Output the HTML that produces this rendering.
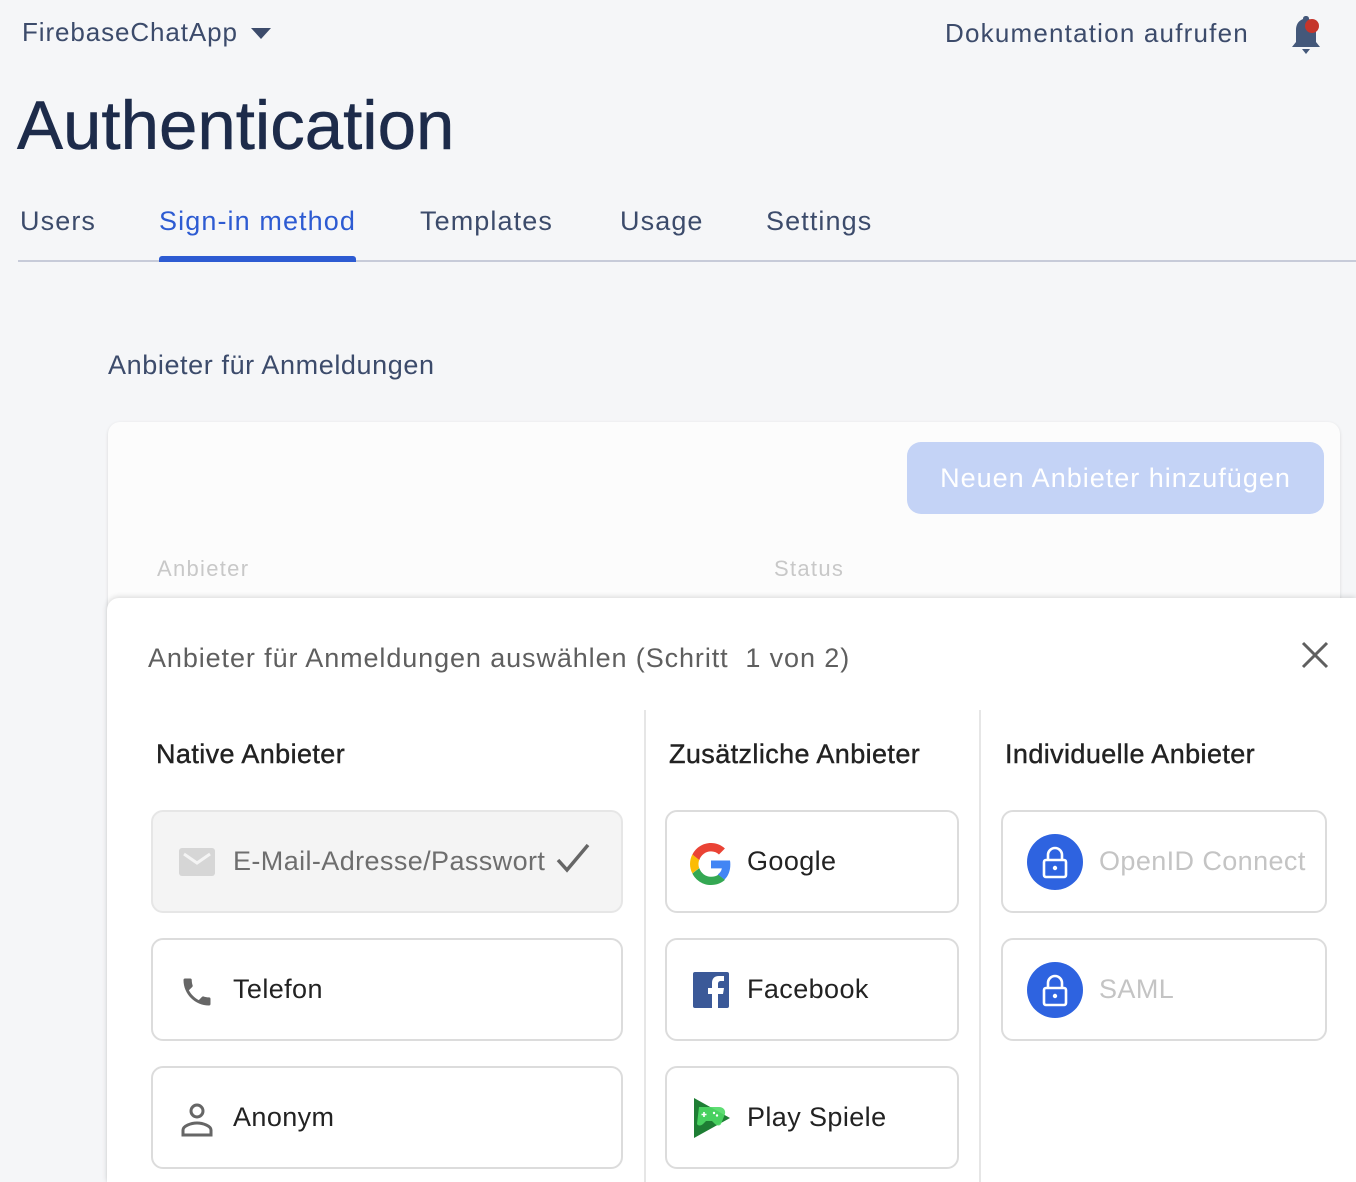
<!DOCTYPE html>
<html style="width:1356px;height:1182px;overflow:hidden"><head><meta charset="utf-8"><style>
*{box-sizing:border-box;margin:0;padding:0}
html,body{width:1356px;height:1182px;overflow:hidden}
body{background:#f5f6f8;font-family:"Liberation Sans",sans-serif;position:relative}
.a{position:absolute;white-space:nowrap}
.tab{font-size:27px;color:#3c4b6b;letter-spacing:1.1px;top:206px}
.h{font-size:27px;color:#222;letter-spacing:0.4px;-webkit-text-stroke:0.4px #222;top:739px}
.btn{position:absolute;border:2px solid #dcdcdc;border-radius:12px;background:#fff;height:103px}
.btn .t{position:absolute;left:80px;top:34px;font-size:27px;color:#222;letter-spacing:0.4px;white-space:nowrap}
.btn svg{position:absolute}
</style></head><body>
<div class="a" style="left:22px;top:17px;font-size:26px;color:#3c4b6b;letter-spacing:0.9px">FirebaseChatApp</div>
<svg class="a" style="left:251px;top:28px" width="20" height="12"><path d="M0 0h20L10 11z" fill="#3c4b6b"/></svg>
<div class="a" style="left:945px;top:18px;font-size:26px;color:#3c4b6b;letter-spacing:1.2px">Dokumentation aufrufen</div>
<svg class="a" style="left:1288px;top:14px" width="36" height="42"><path d="M18 2c-2 0-3 1-3 3-5 2-7 6-7 11v12l-4 5h28l-4-5V16c0-5-2-9-7-11 0-2-1-3-3-3z" fill="#44587a"/><path d="M14 35h8l-4 5z" fill="#44587a"/><circle cx="24" cy="12" r="7" fill="#c5352b"/></svg>
<div class="a" style="left:17px;top:86px;font-size:69px;color:#1d2b4a;-webkit-text-stroke:0.5px #1d2b4a">Authentication</div>
<div class="a tab" style="left:20px">Users</div>
<div class="a tab" style="left:159px;color:#2d5bd2">Sign-in method</div>
<div class="a tab" style="left:420px">Templates</div>
<div class="a tab" style="left:620px">Usage</div>
<div class="a tab" style="left:766px">Settings</div>
<div class="a" style="left:18px;top:260px;width:1338px;height:2px;background:#c7cbd9"></div>
<div class="a" style="left:159px;top:256px;width:197px;height:6px;background:#2d5bd2;border-radius:3px 3px 0 0"></div>
<div class="a" style="left:108px;top:350px;font-size:27px;color:#3c4b6b;letter-spacing:0.6px">Anbieter für Anmeldungen</div>
<div class="a" style="left:108px;top:422px;width:1232px;height:760px;background:#fcfcfc;border-radius:12px 12px 0 0;box-shadow:0 1px 3px rgba(0,0,0,.12)"></div>
<div class="a" style="left:907px;top:442px;width:417px;height:72px;background:#c4d3f6;border-radius:14px;color:#fff;font-size:27px;text-align:center;line-height:72px;letter-spacing:1px">Neuen Anbieter hinzufügen</div>
<div class="a" style="left:157px;top:556px;font-size:22px;color:#c8c8c8;letter-spacing:1.3px">Anbieter</div>
<div class="a" style="left:774px;top:556px;font-size:22px;color:#c8c8c8;letter-spacing:1.3px">Status</div>
<div class="a" style="left:107px;top:598px;width:1249px;height:584px;background:#fff;border-radius:12px 0 0 0;box-shadow:0 -1px 6px rgba(0,0,0,.15)"></div>
<div class="a" style="left:148px;top:643px;font-size:27px;color:#5f5f5f;letter-spacing:0.9px">Anbieter für Anmeldungen auswählen (Schritt &nbsp;1 von 2)</div>
<svg class="a" style="left:1300px;top:640px" width="30" height="30"><path d="M3 3l24 24M27 3L3 27" stroke="#5f5f5f" stroke-width="3"/></svg>
<div class="a" style="left:644px;top:710px;width:2px;height:472px;background:#e6e6e6"></div>
<div class="a" style="left:979px;top:710px;width:2px;height:472px;background:#e6e6e6"></div>
<div class="a h" style="left:156px">Native Anbieter</div>
<div class="a h" style="left:669px">Zusätzliche Anbieter</div>
<div class="a h" style="left:1005px">Individuelle Anbieter</div>

<div class="btn" style="left:151px;top:810px;width:472px;background:#f4f4f4;border-color:#e6e6e6">
<svg style="left:26px;top:36px" width="36" height="30"><rect width="36" height="28" rx="3" fill="#d6d6d6"/><path d="M5 6l13 9 13-9" stroke="#f4f4f4" stroke-width="3" fill="none"/></svg>
<div class="t" style="color:#6e6e6e">E-Mail-Adresse/Passwort</div>
<svg style="left:402px;top:30px" width="36" height="32"><path d="M3 18l9 10L33 3" stroke="#666" stroke-width="3.5" fill="none"/></svg></div>
<div class="btn" style="left:151px;top:938px;width:472px">
<svg style="left:26px;top:34px" width="36" height="36" viewBox="0 0 24 24"><path d="M6.6 10.8c1.4 2.8 3.8 5.1 6.6 6.6l2.2-2.2c.3-.3.7-.4 1-.2 1.1.4 2.3.6 3.6.6.6 0 1 .4 1 1V20c0 .6-.4 1-1 1C10.6 21 3 13.4 3 4c0-.6.4-1 1-1h3.5c.6 0 1 .4 1 1 0 1.3.2 2.5.6 3.6.1.3 0 .7-.2 1z" fill="#666"/></svg>
<div class="t">Telefon</div></div>
<div class="btn" style="left:151px;top:1066px;width:472px">
<svg style="left:26px;top:34px" width="36" height="36"><circle cx="18" cy="9" r="6" stroke="#666" stroke-width="3" fill="none"/><path d="M4 33v-5c0-4 8-7 14-7s14 3 14 7v5z" stroke="#666" stroke-width="3" fill="none"/></svg>
<div class="t">Anonym</div></div>

<div class="btn" style="left:665px;top:810px;width:294px">
<svg style="left:23px;top:31px" width="42" height="42" viewBox="0 0 48 48"><path fill="#EA4335" d="M24 9.5c3.5 0 6.6 1.2 9.1 3.6l6.8-6.8C35.8 2.4 30.4 0 24 0 14.6 0 6.6 5.4 2.7 13.3l7.9 6.2C12.5 13.7 17.8 9.5 24 9.5z"/><path fill="#4285F4" d="M46.1 24.5c0-1.6-.1-3.1-.4-4.5H24v9h12.4c-.5 2.9-2.2 5.4-4.7 7l7.6 5.9c4.4-4.1 6.8-10.1 6.8-17.4z"/><path fill="#FBBC05" d="M10.5 28.6c-.5-1.4-.8-3-.8-4.6s.3-3.2.8-4.6l-7.9-6.2C1 16.5 0 20.1 0 24s1 7.5 2.7 10.7z"/><path fill="#34A853" d="M24 48c6.5 0 11.9-2.1 15.9-5.8l-7.6-5.9c-2.1 1.4-4.9 2.3-8.3 2.3-6.2 0-11.5-4.2-13.4-9.9l-7.9 6.1C6.6 42.6 14.6 48 24 48z"/></svg>
<div class="t">Google</div></div>
<div class="btn" style="left:665px;top:938px;width:294px">
<svg style="left:26px;top:32px" width="36" height="36"><rect width="36" height="36" rx="2" fill="#3b5998"/><path d="M25 36V22h5l1-6h-6v-4c0-2 1-3 3-3h3V4h-5c-5 0-7 3-7 7v5h-4v6h4v14z" fill="#fff"/></svg>
<div class="t">Facebook</div></div>
<div class="btn" style="left:665px;top:1066px;width:294px">
<svg style="left:26px;top:29px" width="38" height="42"><path d="M1 1l36 20L1 41z" fill="#1e7e34"/><path d="M6 10h20c4 0 7 3 6 7l-4 10c-1 2-4 2-6 0l-3-3h-6l-3 3c-2 2-5 2-6 0z" fill="#4cd964" opacity=".9"/><path d="M11 15v5M8.5 17.5h5" stroke="#fff" stroke-width="1.6"/><circle cx="21" cy="16" r="1.2" fill="#fff"/><circle cx="24" cy="18.5" r="1.2" fill="#fff"/></svg>
<div class="t">Play Spiele</div></div>

<div class="btn" style="left:1001px;top:810px;width:326px">
<svg style="left:24px;top:22px" width="56" height="56"><circle cx="28" cy="28" r="28" fill="#2e63e0"/><rect x="17" y="26" width="22" height="17" rx="2" stroke="#fff" stroke-width="2.6" fill="none"/><path d="M21 26v-5a7 7 0 0 1 14 0v5" stroke="#fff" stroke-width="2.6" fill="none"/><circle cx="28" cy="34" r="2.2" fill="#fff"/></svg>
<div class="t" style="left:96px;color:#c4c4c4">OpenID Connect</div></div>
<div class="btn" style="left:1001px;top:938px;width:326px">
<svg style="left:24px;top:22px" width="56" height="56"><circle cx="28" cy="28" r="28" fill="#2e63e0"/><rect x="17" y="26" width="22" height="17" rx="2" stroke="#fff" stroke-width="2.6" fill="none"/><path d="M21 26v-5a7 7 0 0 1 14 0v5" stroke="#fff" stroke-width="2.6" fill="none"/><circle cx="28" cy="34" r="2.2" fill="#fff"/></svg>
<div class="t" style="left:96px;color:#c4c4c4">SAML</div></div>
</body></html>
